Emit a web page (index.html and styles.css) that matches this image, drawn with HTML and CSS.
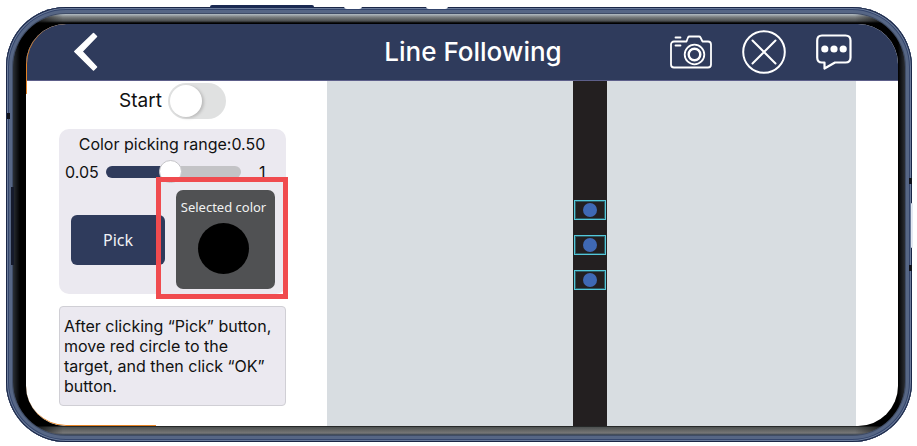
FILE: index.html
```html
<!DOCTYPE html>
<html lang="en">
<head>
<meta charset="utf-8">
<meta name="viewport" content="width=device-width, initial-scale=1">
<title>Line Following</title>
<link rel="stylesheet" href="styles.css">
</head>
<body>
<div class="phone">
  <span class="side-key"></span>
  <span class="slot"></span>
  <span class="notch notch-a"></span>
  <span class="notch notch-b"></span>
  <span class="mark mark-left"></span>
  <span class="mark mark-right-a"></span>
  <span class="mark mark-right-b"></span>
  <span class="power"></span>
  <div class="bezel">
    <div class="screen">
      <header class="topbar">
        <button class="icon-button back" type="button" aria-label="Back">
          <svg width="24" height="40" viewBox="0 0 24 40" fill="#fff" stroke="#fff" stroke-width="1.500" stroke-linejoin="round"><path d="M19.500 1.500L0.800 19.500L19.500 38L22.500 35L8 19.500L22.500 4.500Z"/></svg>
        </button>
        <h1>Line Following</h1>
        <nav class="actions">
          <button class="icon-button" type="button" aria-label="Camera">
            <svg width="42" height="34" viewBox="0 0 42 34" fill="none" stroke="#fff" stroke-width="1.800" stroke-linecap="round" stroke-linejoin="round">
              <path d="M15 6.500H4A3 3 0 0 0 1 9.500V29.500A3 3 0 0 0 4 32.500H38A3 3 0 0 0 41 29.500V9.500A3 3 0 0 0 38 6.500H32.500L30.500 2.500Q30 1.500 29 1.500H19.500Q18.500 1.500 18 2.500L16.500 6.500Z"/>
              <path d="M5.500 2.500H10.500M5.500 10.500H10.500"/>
              <circle cx="24.500" cy="19.500" r="9.800"/><circle cx="24.500" cy="19.500" r="5.800" stroke-width="2.400"/>
            </svg>
          </button>
          <button class="icon-button" type="button" aria-label="Stop">
            <svg width="44" height="44" viewBox="0 0 44 44" fill="none" stroke="#fff" stroke-width="2" stroke-linecap="round"><circle cx="22" cy="22" r="20.800"/><path d="M10.500 10.500L33.500 33.500M33.500 10.500L10.500 33.500"/></svg>
          </button>
          <button class="icon-button" type="button" aria-label="Messages">
            <svg width="36" height="36" viewBox="0 0 36 36" fill="none" stroke="#fff" stroke-width="2.200" stroke-linejoin="round"><path d="M6 1.500H29.500Q34.500 1.500 34.500 6.500V23.500Q34.500 28.500 29.500 28.500H19L8.500 34.500V28.500H6Q1.200 28.500 1.200 23.500V6.500Q1.200 1.500 6 1.500Z"/><g fill="#fff" stroke="none"><circle cx="8.800" cy="15" r="3.600"/><circle cx="18" cy="15" r="3.600"/><circle cx="27.200" cy="15" r="3.600"/></g></svg>
          </button>
        </nav>
      </header>
      <main class="content">
        <section class="panel">
          <label class="start">Start <input class="switch" type="checkbox" role="switch"></label>
          <div class="card">
            <label class="range-title" for="range">Color picking range:0.50</label>
            <div class="range-row">
              <span>0.05</span>
              <input class="slider" id="range" type="range" min="0.05" max="1" step="0.01" value="0.5">
              <span class="max">1</span>
            </div>
            <div class="pick-row">
              <button class="pick" type="button">Pick</button>
              <div class="swatch">
                <span>Selected color</span>
                <i class="swatch-color"></i>
                <span class="highlight"></span>
              </div>
            </div>
          </div>
          <p class="tip">After clicking “Pick” button, move red circle to the target, and then click “OK” button.</p>
        </section>
        <section class="camera" aria-label="Camera view">
          <div class="line">
            <span class="target"></span>
            <span class="target"></span>
            <span class="target"></span>
          </div>
        </section>
      </main>
    </div>
  </div>
</div>
</body>
</html>
```
FILE: styles.css
```css
* { box-sizing: border-box; }

body {
  margin: 0;
  height: 100vh;
  padding: 7px 5px 4px 6px;
  display: flex;
  background: #fff;
  color: #111;
  font: 16px/20px Inter, "Liberation Sans", sans-serif;
}

button, input { font: inherit; margin: 0; }

/* Device body */
.phone {
  position: relative;
  flex: 1;
  display: flex;
  padding: 7px;
  border-radius: 60px;
  background: #53627f;
  box-shadow:
    inset 0 0 0 1px #1b2747,
    inset 0 0 0 2px #6b7c9b,
    inset 0 0 0 3px #34456c,
    inset 0 0 0 6px #566685,
    inset 0 0 0 7px #3f4c66;
}

.bezel {
  flex: 1;
  display: flex;
  padding: 10px 7px 9px 13px;
  border-radius: 53px;
  background:
    linear-gradient(90deg, #2a2f35, #000 7px, #000 12px, transparent 50px, transparent calc(100% - 50px), #000 calc(100% - 7px), #2c2f35),
    linear-gradient(#b4bec5, #7b7f80 3px, #4a4d4f 7px, #000 9px, #000 50%, #000 calc(100% - 9px), #4c5050 calc(100% - 8px), #777 calc(100% - 2px), #34404f);
}

.screen {
  position: relative;
  flex: 1;
  display: flex;
  flex-direction: column;
  overflow: hidden;
  border-radius: 40px;
  background: #fff;
}

.screen::before,
.screen::after {
  content: "";
  position: absolute;
  pointer-events: none;
}

.screen::before {
  top: 0;
  left: 0;
  width: 50px;
  height: 70px;
  border-left: 1px solid #e58324;
  border-top-left-radius: 40px;
}

.screen::after {
  bottom: 0;
  left: 0;
  width: 130px;
  height: 50px;
  border-bottom: 1px solid #e58324;
  border-bottom-left-radius: 40px;
}

.side-key, .slot, .notch, .mark, .power { position: absolute; }
.side-key { top: -2px; left: 204px; width: 104px; height: 3px; background: #1b2a52; border-radius: 2px 2px 0 0; }
.slot { top: 180px; left: 5px; width: 3px; height: 78px; background: #151a2b; }
.notch { top: -1px; height: 3px; background: #fff; border-radius: 0 0 8px 8px; }
.notch-a { left: 338px; width: 18px; }
.notch-b { left: 420px; width: 22px; }
.mark { width: 3px; height: 6px; background: #10131c; }
.mark-left { top: 106px; left: 1px; }
.mark-right-a { top: 171px; right: 0; }
.mark-right-b { top: 258px; right: 0; }
.power { top: 196px; right: -1px; width: 2px; height: 45px; background: #e4e9f2; border-radius: 2px; }

/* Title bar */
.topbar {
  display: grid;
  grid-template-columns: 1fr auto 1fr;
  align-items: center;
  height: 57px;
  padding: 0 46px 0 48px;
  border-bottom: 1px solid #5d5f8a;
  background: #2f3b5c;
  color: #fff;
}

.topbar h1 {
  margin: 0 0 0 20px;
  font-size: 26px;
  font-weight: 500;
  line-height: 32px;
}

.icon-button {
  padding: 0;
  border: 0;
  background: none;
}

.icon-button svg { display: block; }
.back { justify-self: start; }

.actions {
  display: flex;
  align-items: center;
  justify-self: end;
  gap: 30px;
}

/* Controls */
.content {
  flex: 1;
  display: flex;
  padding: 0 42px 0 33px;
}

.panel {
  flex: 0 0 227px;
  margin-right: 41px;
}

.start {
  display: flex;
  align-items: center;
  justify-content: center;
  gap: 6px;
  height: 36px;
  margin: 2px 0 10px;
  font-size: 19px;
}

.switch {
  appearance: none;
  display: flex;
  width: 58px;
  height: 36px;
  padding: 2px;
  border-radius: 18px;
  background: #e0e1e1;
}

.switch::before {
  content: "";
  width: 32px;
  height: 32px;
  border-radius: 50%;
  background: #fff;
  box-shadow: 2px 1px 3px #bbb;
}

.switch:checked { justify-content: flex-end; background: #2f3b5c; }

.card {
  padding: 5px 11px 5px 6px;
  border-radius: 10px;
  background: #ebe9f0;
}

.range-title { display: block; padding-left: 4px; text-align: center; }

.range-row {
  display: flex;
  align-items: center;
  gap: 7px;
  height: 36px;
}

.slider {
  appearance: none;
  flex: 1;
  min-width: 0;
  height: 24px;
  background: none;
}

.slider::-webkit-slider-runnable-track {
  height: 12px;
  border-radius: 6px;
  background: linear-gradient(90deg, #2f3b5c 47%, #c3c3c6 47%);
}

.slider::-webkit-slider-thumb {
  appearance: none;
  width: 23px;
  height: 23px;
  margin-top: -6px;
  border: 1px solid #c4c4c8;
  border-radius: 50%;
  background: #fff;
}

.max { width: 27px; padding-left: 11px; }

.pick-row {
  display: flex;
  align-items: center;
  justify-content: space-between;
  padding-left: 6px;
}

.pick {
  width: 94px;
  height: 50px;
  padding: 0;
  border: 0;
  border-radius: 6px;
  background: #2f3b5c;
  color: #f1f2f6;
  font-family: "Noto Sans", sans-serif;
}

.swatch {
  position: relative;
  display: flex;
  flex-direction: column;
  align-items: center;
  gap: 6px;
  width: 99px;
  height: 99px;
  padding: 7px 4px 0 0;
  border-radius: 7px;
  background: #505153;
  color: #f1f1f1;
  font: 13px/20px "Noto Sans", sans-serif;
  white-space: nowrap;
}

.swatch-color {
  width: 51px;
  height: 51px;
  border-radius: 50%;
  background: #000;
}

.highlight {
  position: absolute;
  inset: -13px -13px -10px -20px;
  border: 5px solid #f04b4f;
}

.tip {
  margin: 12px 0 0;
  padding: 9px 4px;
  border: 1px solid #d0cfd5;
  border-radius: 4px;
  background: #ebe9f0;
}

/* Camera view */
.camera {
  flex: 1;
  display: flex;
  justify-content: center;
  padding-right: 3px;
  background: #d8dde1;
}

.line {
  display: flex;
  flex-direction: column;
  align-items: center;
  gap: 15px;
  width: 34px;
  padding-top: 119px;
  background: #231f20;
}

.target {
  display: grid;
  place-items: center;
  width: 32px;
  height: 20px;
  border: 1px solid #55c7d9;
  box-shadow: inset 0 0 0 1px #2b5a63;
}

.target::before {
  content: "";
  width: 14px;
  height: 14px;
  border-radius: 50%;
  background: #3f69b5;
}
```
